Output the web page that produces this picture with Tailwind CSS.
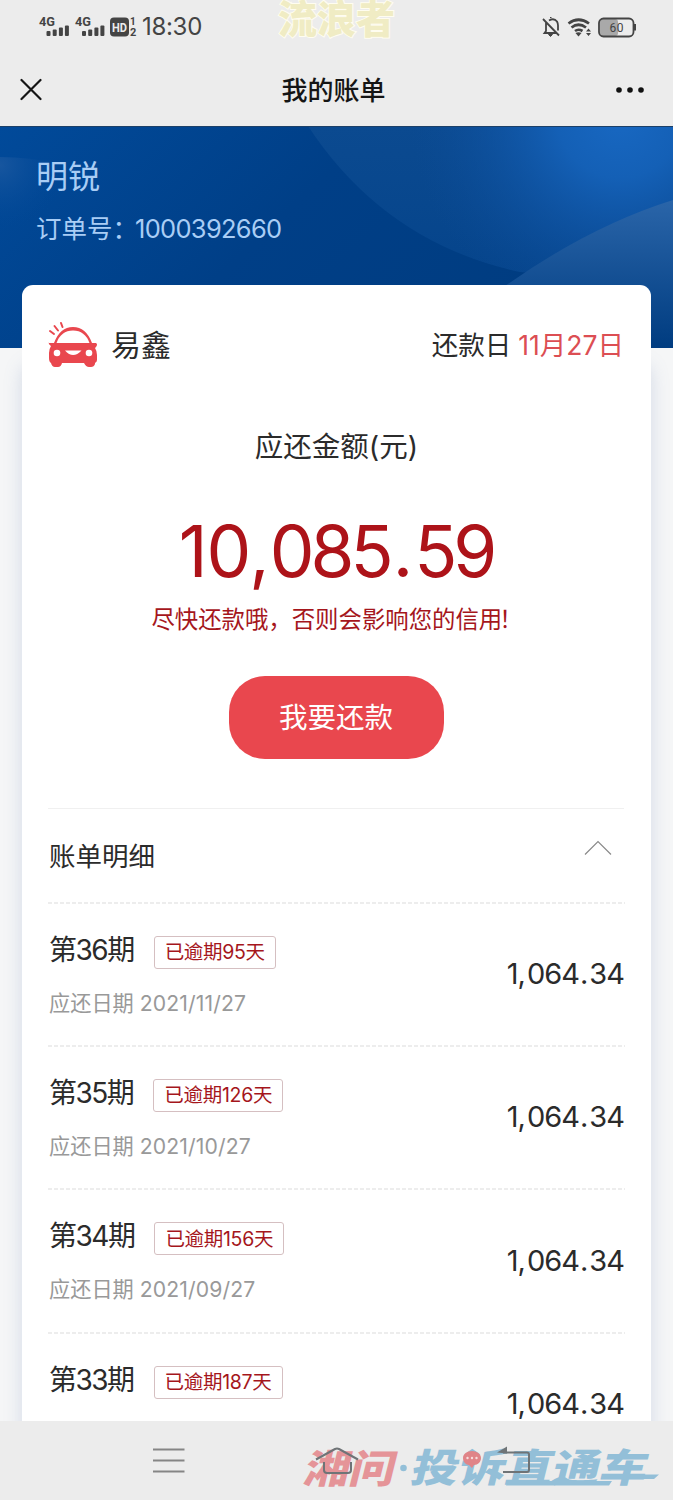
<!DOCTYPE html>
<html lang="zh-CN">
<head>
<meta charset="utf-8">
<title>我的账单</title>
<script src="https://cdn.jsdelivr.net/npm/@tailwindcss/browser@4"></script>
</head>
<body class="w-[673px] h-[1500px] overflow-hidden bg-[#f5f6f7] font-['Inter','Noto_Sans_CJK_SC',sans-serif] text-[#2b2b2b]">
<div class="relative flex h-[1500px] w-[673px] flex-col overflow-hidden">

  <!-- status bar -->
  <header class="h-[126px] shrink-0 bg-[#ececec]">
    <div class="relative flex h-[54px] items-center justify-between">
      <div class="flex items-center">
        <svg class="ml-[38px]" width="100" height="26" viewBox="38 13 100 26" fill="#444">
          <g font-family="Roboto" font-weight="700" font-size="12">
            <text x="39" y="25" textLength="16" lengthAdjust="spacingAndGlyphs">4G</text>
            <text x="75" y="25" textLength="16" lengthAdjust="spacingAndGlyphs">4G</text>
            <text x="130" y="24" font-size="10">1</text>
            <text x="130" y="35" font-size="11">2</text>
          </g>
          <g id="bars">
            <rect x="46.500" y="30" width="4" height="5" rx="1"/><rect x="52.700" y="28.500" width="4" height="6.500" rx="1"/><rect x="58.900" y="26.500" width="4" height="8.500" rx="1"/><rect x="64.900" y="24.500" width="4" height="10.500" rx="1"/>
          </g>
          <use href="#bars" x="35.500"/>
          <rect x="110" y="16.500" width="19" height="19" rx="4"/>
          <text x="112" y="30.500" font-family="Roboto" font-weight="700" font-size="12" fill="#ececec" textLength="15" lengthAdjust="spacingAndGlyphs">HD</text>
        </svg>
        <span class="ml-[4px] text-[24px] leading-[26px] tracking-[-0.3px] text-[#444]">18:30</span>
      </div>
      <svg class="mr-[34px]" width="98" height="24" viewBox="541 14 98 24" fill="none" stroke="#444">
        <path d="M543 18l16 16.500M546 20.500V30l-1.500 2h12M549 19.500q5-3 8 1 1 2 1 4v5" stroke-width="1.800"/>
        <path d="M548.500 33.500h4l-2 2zM550 16.500h1.500" fill="#444" stroke-width="1"/>
        <path d="M568.500 22.500q10-7.500 20.500 0M571.500 26.500q7-5.500 14.500 0M575 30q3.500-2.500 7.500 0" stroke-width="2.700"/>
        <path d="M575.500 32q3-1.500 6 0l-3 3.500z" fill="#444" stroke="none"/>
        <path d="M586 30.500h5l-2.500-3zM586 32h5l-2.500 3z" fill="#444" stroke="none"/>
        <rect x="600" y="18" width="18" height="17" rx="3" fill="#a9a9a9" stroke="none"/>
        <rect x="599" y="17.500" width="34.500" height="18" rx="4.500" stroke-width="1.800"/>
        <rect x="634" y="23" width="2" height="6.500" fill="#444" stroke="none"/>
        <text x="609.500" y="30.700" font-family="Roboto" font-size="12" fill="#444" stroke="none" textLength="14">60</text>
      </svg>
      <div class="absolute left-[278px] top-[-2px] text-[39px] leading-[42px] font-black whitespace-nowrap text-[#f0ecc4] [-webkit-text-stroke:2px_#fffdf0] [paint-order:stroke_fill]">流浪者</div>
    </div>
    <div class="grid h-[72px] grid-cols-3 items-center">
      <svg class="ml-[20px]" width="24" height="24" viewBox="0 0 24 24" fill="none" stroke="#151515" stroke-width="2.200" stroke-linecap="round"><path d="M1.500 2l19 19M20.500 2l-19 19"/></svg>
      <h1 class="-ml-[6px] mt-[2px] text-center text-[26px] leading-[36px] font-medium text-[#151515]">我的账单</h1>
      <svg class="mr-[28px] justify-self-end" width="30" height="10" viewBox="0 0 30 10" fill="#111"><circle cx="4" cy="5" r="2.800"/><circle cx="15" cy="5" r="2.800"/><circle cx="26" cy="5" r="2.800"/></svg>
    </div>
  </header>

  <!-- blue banner -->
  <section class="relative h-[222px] shrink-0 bg-[#004690]">
    <svg class="absolute inset-0" width="673" height="222" viewBox="0 126 673 222">
      <defs>
        <linearGradient id="base" x1="0" x2="1" y1="0" y2=".35"><stop offset="0" stop-color="#014a9a"/><stop offset=".5" stop-color="#003f87"/><stop offset="1" stop-color="#003c80"/></linearGradient>
        <radialGradient id="glow" gradientUnits="userSpaceOnUse" cx="620" cy="115" r="210"><stop offset="0" stop-color="#1868c2"/><stop offset=".3" stop-color="#1460b6"/><stop offset="1" stop-color="#0d4c98" stop-opacity="0"/></radialGradient>
        <linearGradient id="disc" gradientUnits="userSpaceOnUse" x1="0" x2="0" y1="126" y2="280"><stop offset="0" stop-color="#0b4a90"/><stop offset="1" stop-color="#05448b"/></linearGradient>
        <linearGradient id="hill" x1="0" x2="0" y1="0" y2="1"><stop offset="0" stop-color="#2a65a9"/><stop offset="1" stop-color="#003c80"/></linearGradient>
        <radialGradient id="left" gradientUnits="userSpaceOnUse" cx="0" cy="165" r="65"><stop offset="0" stop-color="#17569f"/><stop offset="1" stop-color="#014897" stop-opacity="0"/></radialGradient>
      </defs>
      <rect y="126" width="673" height="222" fill="url(#base)"/>
      <path d="M0 157Q60 158 110 180V240H0z" fill="url(#left)"/>
      <path d="M308 126Q385 243 520 272L673 285V126z" fill="url(#disc)"/>
      <path d="M308 126Q385 243 520 272L673 285V126z" fill="url(#glow)"/>
      <path d="M505 286Q590 226 673 200V348H505z" fill="url(#hill)"/>
      <path d="M0 126.500H673" stroke="#1c4068"/>
    </svg>
    <div class="relative flex flex-col pl-[36px] text-[#a9cdf5]">
      <p class="mt-[30px] text-[32px] leading-[42px]">明锐</p>
      <p class="mt-[12px] flex text-[25.500px] leading-[38px]"><span class="w-[99px] whitespace-nowrap">订单号：</span><span class="tracking-[-0.7px]">1000392660</span></p>
    </div>
  </section>

  <!-- bill card -->
  <main class="relative mx-[22px] -mt-[63px] h-[1136px] shrink-0 overflow-visible rounded-t-[11px] bg-white pr-[27px] pl-[26px] shadow-[0_80px_18px_rgba(110,135,185,0.25)]">
    <div class="flex h-[120px] items-center">
      <svg class="-mt-[2px]" width="50" height="46" viewBox="48 321 50 46" fill="#e9474e">
        <path d="M49 343h5Q60 327 73 327t19 16h4q2 1 0 4l-1 1q2 3 2 7v5q0 2-2 3v1q-1 3-4 3h-2q-3 0-5-4H62q-1 4-4 4h-3q-3 0-4-4-2-1-2-5v-5q0-4 2-7-3-2-2-4z"/>
        <path d="M56.500 343Q61 330.500 73 330.500T89.500 343z" fill="#fff"/>
        <circle cx="57" cy="353" r="3.300" fill="#fff"/><circle cx="89" cy="353" r="3.300" fill="#fff"/>
        <path d="M65 350.500h16.500q-8.500 9-16.500 0z" fill="#fff"/>
        <path d="M50 331l4 3M54.500 326l3.500 4.500M61 323l1.500 4" stroke="#e9474e" stroke-width="2" stroke-linecap="round"/>
      </svg>
      <span class="ml-[13px] text-[30px] leading-[44px]">易鑫</span>
      <span class="ml-auto text-[26.500px] leading-[40px]">还款日</span>
      <span class="ml-[7px] text-[26.500px] leading-[40px] text-[#dc4e53]">11月27日</span>
    </div>
    <div class="flex flex-col items-center text-center">
      <p class="mt-[22px] ml-px text-[28.500px] leading-[40px]">应还金额(元)</p>
      <p class="mt-[44px] text-[71px] leading-[80px] tracking-[-4px] text-[#ad1319]"><span class="tracking-[-1px]">1</span>0<span class="ml-[2px] tracking-[0px]">,</span>085<span class="ml-[3px] tracking-[1px]">.</span>59</p>
      <p class="mt-[13px] -mr-[2px] whitespace-nowrap text-[23.400px] leading-[32px] text-[#a5161c]">尽快还款哦，否则会影响您的信用<span class="-ml-[3px]">！</span></p>
      <button class="mt-[40px] h-[83px] w-[215px] rounded-[36px] bg-[#e9474e] text-[28.500px] leading-[40px] text-white">我要还款</button>
    </div>
    <div class="mt-[49px] flex h-[94px] items-center justify-between border-t border-[#f0f0f0]">
      <h2 class="pl-px text-[26.500px] leading-[40px]">账单明细</h2>
      <svg class="mr-[12px] -mt-[16px]" width="28" height="16" viewBox="0 0 28 16" fill="none" stroke="#8a8a8a" stroke-width="1.200"><path d="M1 14.500L14 1.500 27 14.500"/></svg>
    </div>
    <ul id="periods"></ul>
  </main>

  <!-- navigation bar -->
  <nav class="absolute bottom-0 left-0 h-[79px] w-full bg-[#ececec]">
    <svg width="673" height="79" viewBox="0 1421 673 79">
      <path d="M153 1449.500h31.500M153 1460.500h31.500M153 1471.500h31.500" stroke="#858585" stroke-width="2.200"/>
      <g font-family="Noto Sans CJK SC" font-weight="900" font-size="39">
        <text transform="translate(302 1483) skewX(-14)" fill="#e59498" textLength="91" lengthAdjust="spacingAndGlyphs">湘问</text>
        <text transform="translate(409 1482) skewX(-14)" fill="#93bfd8" textLength="236" lengthAdjust="spacingAndGlyphs">投诉直通车</text>
      </g>
      <circle cx="403.500" cy="1468" r="3.300" fill="#93bfd8"/>
      <path d="M508 1481h104l-3 4.500H506zM606 1474.500h53l-5 4.500H604z" fill="#93bfd8"/>
      <path d="M472 1451c-5 0-9 3-9 7s3 7 6 7l3 3 2-3c4 0 7-3 7-7s-4-7-9-7z" fill="#e08488"/>
      <g fill="#f6dddd"><circle cx="467.500" cy="1458" r="1.200"/><circle cx="472" cy="1458" r="1.200"/><circle cx="476.500" cy="1458" r="1.200"/></g>
      <g fill="none" stroke="#6f7477" stroke-width="2">
        <path d="M316 1459.500L335 1449q2-1 4 0l19 10.500M324 1462v8q0 3 3 3h21q3 0 3-3v-8"/>
        <path d="M503 1452.500h24q2 0 2 2v15q0 2.500-2 2.500h-24"/>
      </g>
      <path d="M497 1452.500l10-6v7z" fill="#6f7477"/>
    </svg>
  </nav>
</div>
<script>
  const periods = [
    ["36", "95", "2021/11/27"],
    ["35", "126", "2021/10/27"],
    ["34", "156", "2021/09/27"],
    ["33", "187", "2021/08/27"]
  ];
  document.getElementById("periods").innerHTML = periods.map(([n, days, date]) => `
    <li class="flex h-[143.300px] items-center justify-between">
      <svg class="absolute -mt-[142px]" width="577" height="2"><path d="M0 1H577" stroke="#dcdcdc" stroke-width="1.200" stroke-dasharray="4 2"/></svg>
      <div class="-mt-px pl-px">
        <div class="flex h-[44px] items-center">
          <span class="text-[28px] leading-[44px] tracking-[-1.5px]">第${n}期</span>
          <span class="ml-[20px] mt-[5px] flex h-[33px] items-center rounded-[3px] border border-[#d5bfc1] px-[10px] text-[19.500px] leading-[28px] tracking-[-0.300px] text-[#a5161c]">已逾期${days}天</span>
        </div>
        <div class="mt-[15px] flex gap-[6px] text-[21.200px] leading-[32px] text-[#999]"><span>应还日期</span><span class="tracking-[0.1px]">${date}</span></div>
      </div>
      <span class="mt-px text-[29px] leading-[40px] tracking-[-1px]">1<span class="tracking-[1px]">,</span>064<span class="ml-px tracking-[1px]">.</span>34</span>
    </li>`).join("");
</script>
</body>
</html>
